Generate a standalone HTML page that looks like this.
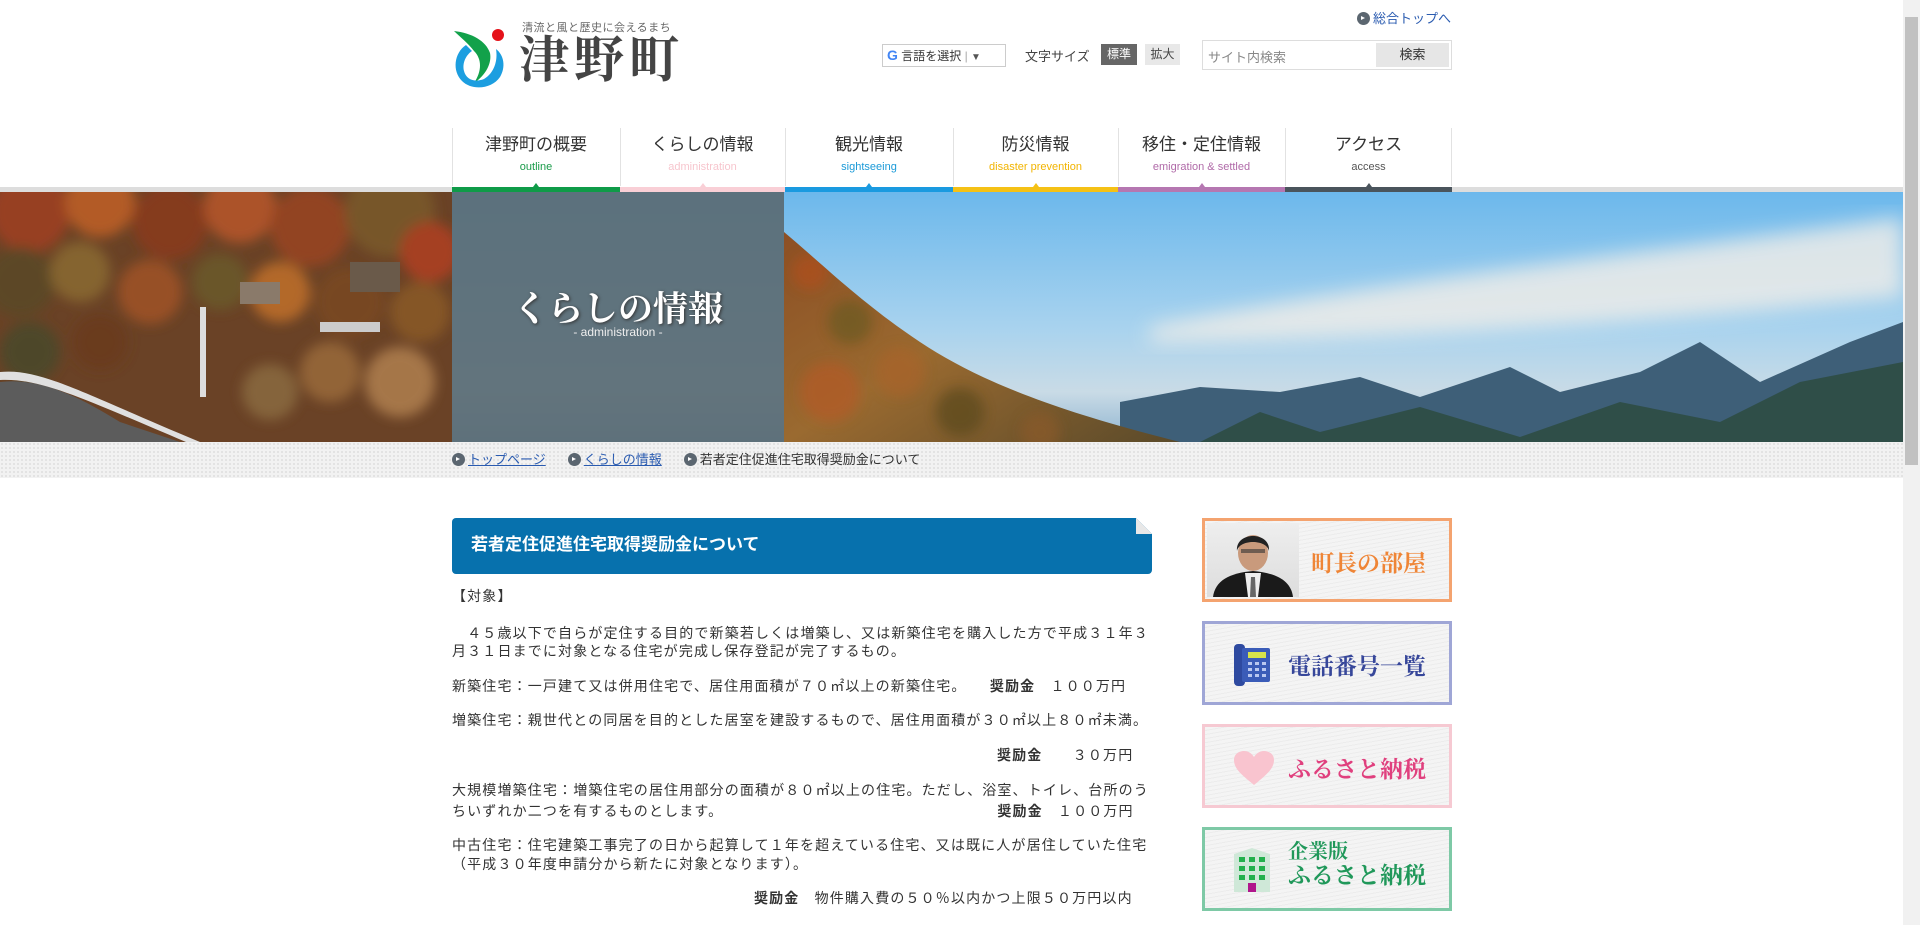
<!DOCTYPE html>
<html lang="ja"><head><meta charset="utf-8">
<style>
*{margin:0;padding:0;box-sizing:border-box}
html,body{width:1920px;height:925px;overflow:hidden;background:#fff}
body{font-family:"Liberation Sans","Noto Sans CJK JP",sans-serif;color:#333;position:relative}
.abs{position:absolute}
.serif{font-family:"Liberation Serif","Noto Serif CJK SC",serif}
#sb{left:1903px;top:0;width:17px;height:925px;background:#f1f1f1}
#sb .th{position:absolute;left:2px;top:17px;width:13px;height:448px;background:#c1c1c1}
.nav{top:128px;height:64px;text-align:center}
.nav .m{font-size:17px;color:#333;margin-top:6px;line-height:22px}
.nav .s{font-size:11px;margin-top:5px}
.nav .bar{position:absolute;left:0;right:0;bottom:0;height:5px}
.nav .tri{position:absolute;left:50%;bottom:5px;margin-left:-3px;border-left:3px solid transparent;border-right:3px solid transparent;border-bottom:4px solid}
.sep{top:128px;width:1px;height:58px;background:#e2e2e2}
.txt p{font-size:14px;letter-spacing:1.15px;line-height:18.5px;margin-bottom:16px;white-space:nowrap}
.ban{left:1202px;width:250px;height:84px;border:3px solid;background:repeating-linear-gradient(170deg,#f4f4f4 0 3px,#ececec 3px 4px)}
.ban .t{position:absolute;font-family:"Liberation Serif","Noto Serif CJK JP",serif;font-weight:bold;font-size:23px;white-space:nowrap}
.bc a{color:#2a5bb0;text-decoration:underline}
.dot{display:inline-block;width:13px;height:13px;border-radius:50%;background:#5b6670;vertical-align:-2px;margin-right:3px;position:relative}
.dot:after{content:"";position:absolute;left:4px;top:4px;border-left:4px solid #fff;border-top:2.5px solid transparent;border-bottom:2.5px solid transparent}
</style></head><body>

<div class="abs" style="left:1357px;top:8px;font-size:13px;color:#2a5bb0"><span class="dot"></span>総合トップへ</div>

<svg class="abs" style="left:452px;top:27px" width="56" height="64" viewBox="0 0 56 64">
<path d="M2 4 C20 6 34 14 38 26 C40 36 34 48 22 56 C30 44 30 32 22 24 C16 16 8 10 2 4Z" fill="#12a14a"/>
<path d="M14 18 C2 26 0 44 10 54 C20 64 40 62 48 50 C54 40 52 28 44 22 C46 34 42 46 32 52 C22 56 14 52 12 44 C10 36 14 28 20 24Z" fill="#1c9ee0"/>
<circle cx="46" cy="8" r="6" fill="#e5121a"/>
</svg>
<div class="abs" style="left:522px;top:19px;font-size:11px;color:#666;letter-spacing:.5px">清流と風と歴史に会えるまち</div>
<div class="abs serif" style="left:519px;top:32px;font-size:50px;color:#444;letter-spacing:5px;font-weight:bold;line-height:56px">津野町</div>

<div class="abs" style="left:882px;top:44px;width:124px;height:23px;border:1px solid #ccc;font-size:12px;line-height:21px;padding-left:4px;background:#fff">
<span style="font-weight:bold;color:#4285f4;font-size:14px">G</span> 言語を選択 <span style="color:#aaa">|</span> <span style="color:#555;font-size:10px">▼</span></div>
<div class="abs" style="left:1025px;top:46px;font-size:13px;color:#444">文字サイズ</div>
<div class="abs" style="left:1101px;top:44px;width:36px;height:21px;background:#666;color:#fff;font-size:12px;text-align:center;line-height:21px">標準</div>
<div class="abs" style="left:1145px;top:44px;width:35px;height:21px;background:#e8e8e8;color:#444;font-size:12px;text-align:center;line-height:21px">拡大</div>
<div class="abs" style="left:1202px;top:40px;width:250px;height:30px;border:1px solid #ddd;background:#fff">
<span class="abs" style="left:5px;top:6px;font-size:13px;color:#888">サイト内検索</span>
<div class="abs" style="right:2px;top:2px;width:73px;height:24px;background:#e6e6e6;font-size:13px;text-align:center;line-height:24px">検索</div></div>

<div class="abs" style="left:0;top:187px;width:1903px;height:5px;background:#ddd"></div>
<div class="abs nav" style="left:452px;width:168px"><div class="m">津野町の概要</div><div class="s" style="color:#1a9b4a">outline</div><div class="tri" style="color:#0f9b48"></div><div class="bar" style="background:#0f9b48"></div></div>
<div class="abs nav" style="left:620px;width:165px"><div class="m">くらしの情報</div><div class="s" style="color:#f7c6ce">administration</div><div class="tri" style="color:#f9cfd6"></div><div class="bar" style="background:#f9cfd6"></div></div>
<div class="abs nav" style="left:785px;width:168px"><div class="m">観光情報</div><div class="s" style="color:#1b9ad8">sightseeing</div><div class="tri" style="color:#1a9ae0"></div><div class="bar" style="background:#1a9ae0"></div></div>
<div class="abs nav" style="left:953px;width:165px"><div class="m">防災情報</div><div class="s" style="color:#f2b400">disaster prevention</div><div class="tri" style="color:#f5c115"></div><div class="bar" style="background:#f5c115"></div></div>
<div class="abs nav" style="left:1118px;width:167px"><div class="m">移住・定住情報</div><div class="s" style="color:#b06aa8">emigration &amp; settled</div><div class="tri" style="color:#b577b1"></div><div class="bar" style="background:#b577b1"></div></div>
<div class="abs nav" style="left:1285px;width:167px"><div class="m">アクセス</div><div class="s" style="color:#555">access</div><div class="tri" style="color:#4a545c"></div><div class="bar" style="background:#4a545c"></div></div>
<div class="abs sep" style="left:452px"></div><div class="abs sep" style="left:620px"></div><div class="abs sep" style="left:785px"></div><div class="abs sep" style="left:953px"></div><div class="abs sep" style="left:1118px"></div><div class="abs sep" style="left:1285px"></div><div class="abs sep" style="left:1451px"></div>

<svg class="abs" style="left:0;top:192px" width="1903" height="250" viewBox="0 0 1903 250">
<defs>
<linearGradient id="sky" x1="0" y1="0" x2="0" y2="1"><stop offset="0" stop-color="#6cb8ec"/><stop offset=".55" stop-color="#a9d3ee"/><stop offset=".8" stop-color="#c9dbe6"/><stop offset="1" stop-color="#8fb4d0"/></linearGradient>
<linearGradient id="slope" x1="0" y1="0" x2="1" y2="1"><stop offset="0" stop-color="#8a4a22"/><stop offset=".5" stop-color="#9a6a30"/><stop offset="1" stop-color="#5a4a2a"/></linearGradient>
<filter id="bl"><feGaussianBlur stdDeviation="6"/></filter>
<filter id="bl2"><feGaussianBlur stdDeviation="10"/></filter>
<clipPath id="lc"><rect x="0" y="0" width="452" height="250"/></clipPath>
<clipPath id="sc"><path d="M784 0 L784 40 C820 70 860 110 920 150 C980 190 1060 220 1180 250 L784 250Z"/></clipPath>
</defs>
<rect width="1903" height="250" fill="url(#sky)"/>
<path d="M1150 135 C1400 85 1700 55 1903 25 L1903 105 C1700 125 1400 148 1150 150Z" fill="#f2eee8" opacity=".8" filter="url(#bl2)"/>
<path d="M1120 210 L1200 195 L1280 200 L1360 185 L1420 205 L1510 175 L1560 200 L1640 180 L1700 150 L1760 190 L1850 150 L1903 130 L1903 250 L1120 250Z" fill="#3e5f78"/>
<path d="M1200 250 L1260 220 L1320 240 L1420 215 L1520 245 L1620 210 L1720 230 L1800 190 L1903 170 L1903 250Z" fill="#2f4e48"/>
<path d="M784 0 L784 40 C820 70 860 110 920 150 C980 190 1060 220 1180 250 L784 250Z" fill="url(#slope)"/>
<g clip-path="url(#sc)"><g opacity=".7" filter="url(#bl)">
<circle cx="810" cy="80" r="18" fill="#b0501e"/><circle cx="850" cy="130" r="22" fill="#6a5a22"/><circle cx="900" cy="180" r="25" fill="#a8642a"/><circle cx="960" cy="220" r="24" fill="#5a4a1e"/><circle cx="830" cy="200" r="30" fill="#b45a26"/><circle cx="1040" cy="240" r="20" fill="#8a5a2a"/>
</g></g>
<rect x="0" y="0" width="452" height="250" fill="#6a4226"/>
<g clip-path="url(#lc)"><g filter="url(#bl)" opacity=".85">
<circle cx="30" cy="20" r="40" fill="#a04020"/><circle cx="100" cy="10" r="35" fill="#c06028"/><circle cx="170" cy="30" r="38" fill="#8a3a1c"/><circle cx="240" cy="15" r="36" fill="#b8562a"/><circle cx="310" cy="35" r="40" fill="#9a4420"/><circle cx="390" cy="20" r="45" fill="#7a5a2a"/><circle cx="430" cy="60" r="30" fill="#b04020"/>
<circle cx="20" cy="90" r="35" fill="#5a4a26"/><circle cx="80" cy="80" r="30" fill="#8a6a30"/><circle cx="150" cy="100" r="32" fill="#a05228"/><circle cx="220" cy="90" r="28" fill="#6a5a2a"/><circle cx="280" cy="100" r="30" fill="#c0702c"/><circle cx="350" cy="110" r="35" fill="#7a4a22"/><circle cx="420" cy="120" r="30" fill="#8a5a28"/>
<circle cx="30" cy="160" r="30" fill="#4a4a2a"/><circle cx="100" cy="150" r="28" fill="#6a3a1c"/><circle cx="330" cy="180" r="30" fill="#9a6a3a"/><circle cx="400" cy="190" r="35" fill="#b08050"/><circle cx="270" cy="200" r="28" fill="#8a6a40"/>
</g></g>
<rect x="240" y="90" width="40" height="22" fill="#8a7a6a"/><rect x="350" y="70" width="50" height="30" fill="#6a5a4a"/><rect x="320" y="130" width="60" height="10" fill="#ccc"/>
<rect x="200" y="115" width="6" height="90" fill="#ddd"/>
<path d="M0 190 C40 185 80 205 120 230 L180 250 L0 250Z" fill="#5c5c5c"/>
<path d="M0 180 C40 176 80 200 200 250 L186 250 C80 205 40 186 0 188Z" fill="#e0e0e0"/>
<rect x="452" y="0" width="332" height="250" fill="#5a6c74" opacity=".93"/>
</svg>
<div class="abs serif" style="left:452px;top:282px;width:332px;text-align:center;color:#fff;font-size:35px;font-weight:bold;text-shadow:1px 1px 3px #333">くらしの情報</div>
<div class="abs" style="left:452px;top:325px;width:332px;text-align:center;color:#eee;font-size:12px">- administration -</div>

<div class="abs bc" style="left:0;top:442px;width:1903px;height:36px;background-color:#f2f2f2;background-image:radial-gradient(#e2e2e2 1px,transparent 1.2px);background-size:4px 4px;font-size:13px;line-height:36px;padding-left:452px">
<span class="dot"></span><a>トップページ</a><span style="display:inline-block;width:22px"></span><span class="dot"></span><a>くらしの情報</a><span style="display:inline-block;width:22px"></span><span class="dot"></span>若者定住促進住宅取得奨励金について</div>

<div class="abs" style="left:452px;top:518px;width:700px;height:56px;background:#0771ad;border-radius:4px;clip-path:polygon(0 0,684px 0,700px 16px,700px 100%,0 100%)"></div>
<div class="abs" style="left:1136px;top:518px;width:16px;height:16px;background:#e8e8e8;clip-path:polygon(0 0,100% 100%,0 100%)"></div>
<div class="abs" style="left:471px;top:532px;color:#fff;font-size:17px;font-weight:bold;line-height:26px">若者定住促進住宅取得奨励金について</div>

<div class="abs txt" style="left:452px;top:587px;width:700px">
<p style="margin-bottom:18px">【対象】</p>
<p>　４５歳以下で自らが定住する目的で新築若しくは増築し、又は新築住宅を購入した方で平成３１年３<br>月３１日までに対象となる住宅が完成し保存登記が完了するもの。</p>
<p>新築住宅：一戸建て又は併用住宅で、居住用面積が７０㎡以上の新築住宅。　　<b>奨励金</b>　１００万円</p>
<p>増築住宅：親世代との同居を目的とした居室を建設するもので、居住用面積が３０㎡以上８０㎡未満。</p>
<p style="padding-left:545px"><b>奨励金</b>　　３０万円</p>
<p style="line-height:20.5px;margin-bottom:15px">大規模増築住宅：増築住宅の居住用部分の面積が８０㎡以上の住宅。ただし、浴室、トイレ、台所のう<br>ちいずれか二つを有するものとします。<span style="display:inline-block;width:274px"></span><b>奨励金</b>　１００万円</p>
<p>中古住宅：住宅建築工事完了の日から起算して１年を超えている住宅、又は既に人が居住していた住宅<br>（平成３０年度申請分から新たに対象となります）。</p>
<p style="padding-left:302px"><b>奨励金</b>　物件購入費の５０％以内かつ上限５０万円以内</p>
</div>

<div class="abs ban" style="top:518px;border-color:#f4a36f">
<div class="abs" style="left:2px;top:2px;width:92px;height:74px;background:linear-gradient(#eee,#ddd)"></div>
<svg class="abs" style="left:2px;top:2px" width="92" height="74" viewBox="0 0 92 74"><path d="M6 74 C8 58 22 50 46 48 C70 50 84 58 86 74Z" fill="#1a1a1a"/><path d="M38 50 L54 50 L51 74 L41 74Z" fill="#eee"/><path d="M44 54 L48 54 L49 74 L43 74Z" fill="#666"/><ellipse cx="46" cy="30" rx="15" ry="18" fill="#c99a7c"/><path d="M30 28 C28 8 64 8 62 28 C60 16 32 16 30 28Z" fill="#222"/><rect x="34" y="26" width="24" height="4" fill="#333" opacity=".6"/></svg>
<div class="t" style="left:106px;top:24px;color:#ef8536">町長の部屋</div></div>

<div class="abs ban" style="top:621px;border-color:#9fa6d6">
<svg class="abs" style="left:29px;top:20px" width="38" height="42" viewBox="0 0 38 42"><rect x="0" y="0" width="11" height="42" rx="4" fill="#2e4aa0"/><rect x="8" y="4" width="28" height="34" rx="2" fill="#3a5cb8"/><rect x="14" y="8" width="18" height="6" fill="#d7e34a"/><g fill="#b9c8f0"><rect x="14" y="18" width="4" height="3"/><rect x="21" y="18" width="4" height="3"/><rect x="28" y="18" width="4" height="3"/><rect x="14" y="24" width="4" height="3"/><rect x="21" y="24" width="4" height="3"/><rect x="28" y="24" width="4" height="3"/><rect x="14" y="30" width="4" height="3"/><rect x="21" y="30" width="4" height="3"/><rect x="28" y="30" width="4" height="3"/></g></svg>
<div class="t" style="left:83px;top:24px;color:#37479a">電話番号一覧</div></div>

<div class="abs ban" style="top:724px;border-color:#f6c9d2">
<svg class="abs" style="left:29px;top:24px" width="40" height="34" viewBox="0 0 40 34"><path d="M20 34 C8 24 0 18 0 9 C0 3 5 0 10 0 C15 0 18 3 20 6 C22 3 25 0 30 0 C35 0 40 3 40 9 C40 18 32 24 20 34Z" fill="#f9c4cf"/></svg>
<div class="t" style="left:83px;top:24px;color:#e0407e">ふるさと納税</div></div>

<div class="abs ban" style="top:827px;border-color:#7ec9a6">
<svg class="abs" style="left:29px;top:18px" width="36" height="44" viewBox="0 0 36 44"><path d="M0 6 L18 0 L36 6 L36 44 L0 44Z" fill="#cfe8d8"/><g fill="#22b04c"><rect x="5" y="9" width="6" height="5"/><rect x="15" y="9" width="6" height="5"/><rect x="25" y="9" width="6" height="5"/><rect x="5" y="18" width="6" height="5"/><rect x="15" y="18" width="6" height="5"/><rect x="25" y="18" width="6" height="5"/><rect x="5" y="27" width="6" height="5"/><rect x="15" y="27" width="6" height="5"/><rect x="25" y="27" width="6" height="5"/></g><rect x="14" y="35" width="8" height="9" fill="#b0168c"/></svg>
<div class="t" style="left:83px;top:10px;color:#20985a;font-size:20px;line-height:24px">企業版<br><span style="font-size:23px">ふるさと納税</span></div></div>

<div class="abs" id="sb"><div class="th"></div></div>
</body></html>
